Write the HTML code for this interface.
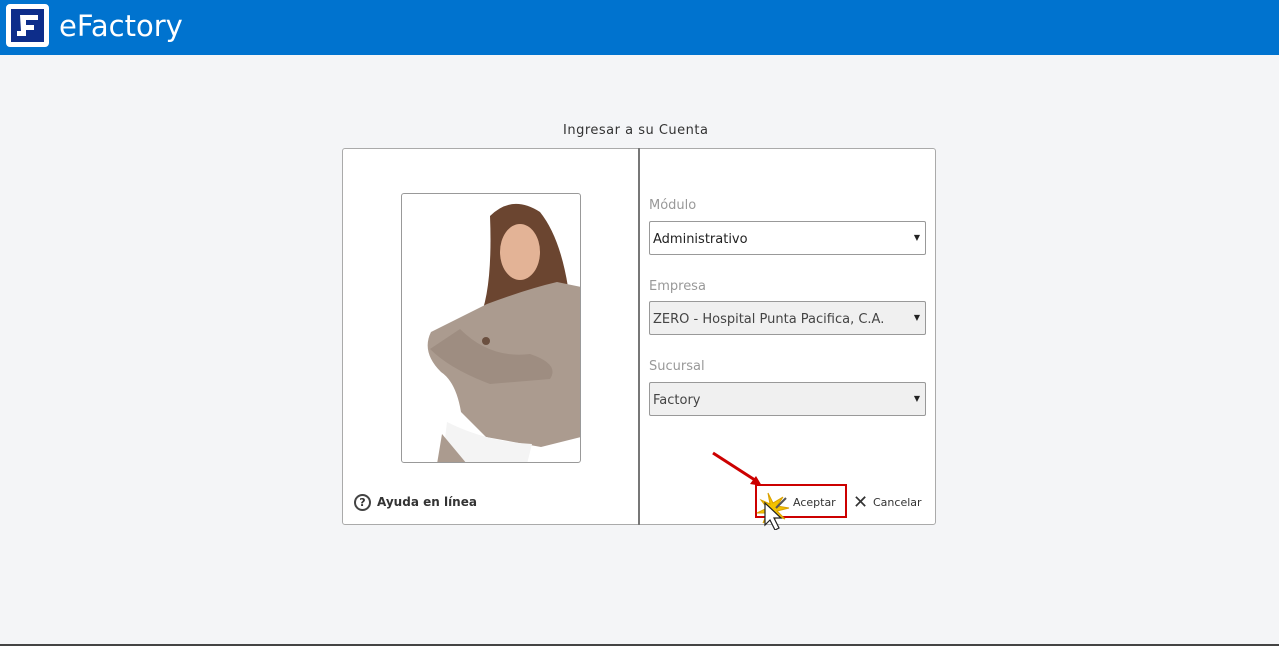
<!DOCTYPE html>
<html><head><meta charset="utf-8"><style>
*{margin:0;padding:0;box-sizing:border-box}
body{width:1279px;height:646px;background:#f4f5f7;font-family:"DejaVu Sans","Liberation Sans",sans-serif;position:relative;overflow:hidden}
.hdr{position:absolute;left:0;top:0;width:1279px;height:55px;background:#0073cf}
.logo{position:absolute;left:6px;top:4px;width:43px;height:43px;border:2px solid #fff;border-radius:4px;background:#fff}
.logo .in{position:absolute;left:3px;top:3px;width:33px;height:33px;background:#0d2d8a}
.title{position:absolute;left:59px;top:9px;color:#fff;font-size:29px;font-family:"DejaVu Sans",sans-serif}
.cap{position:absolute;left:563px;top:123px;font-size:13px;color:#333;letter-spacing:.5px}
.panel{position:absolute;left:342px;top:148px;width:594px;height:377px;background:#fff;border:1px solid #aaa;border-radius:3px}
.div{position:absolute;left:638px;top:148px;width:2px;height:377px;background:#777}
.photo{position:absolute;left:401px;top:193px;width:180px;height:270px;border:1px solid #999;border-radius:3px;background:#fff;overflow:hidden}
.lbl{position:absolute;left:649px;font-size:13px;color:#999}
.sel{position:absolute;left:649px;width:277px;height:34px;border:1px solid #999;border-radius:2px;background:#fff;font-size:13px;color:#222;padding:10px 0 0 3px}
.sel:after{content:"▼";position:absolute;right:5px;top:11px;font-size:8px;color:#222}
.g{background:#f0f0f0;color:#444}
.help{position:absolute;left:354px;top:494px;font-size:12px;font-weight:bold;color:#333}
.help .q{display:inline-block;width:17px;height:17px;border:2px solid #444;border-radius:50%;font-size:11px;text-align:center;line-height:13px;margin-right:6px;vertical-align:middle}
.btn{position:absolute;top:496px;font-size:11px;color:#333}
.red{position:absolute;left:755px;top:484px;width:92px;height:34px;border:2px solid #c00;}
.bline{position:absolute;left:0;top:644px;width:1279px;height:2px;background:#444}
</style></head><body>
<div class="hdr"><div class="logo"><div class="in"><svg width="33" height="33"><path d="M9 6h18v5h-12v5h8v5h-8v6h-9v-5h4z" fill="#fff"/></svg></div></div><div class="title">eFactory</div></div>
<div class="cap">Ingresar a su Cuenta</div>
<div class="panel"></div><div class="div"></div>
<div class="photo"><svg width="180" height="270" viewBox="0 0 180 270">
<path d="M88 22 q22-22 50-4 q20 25 28 75 l10 45 -40 -20 -30 5 q-20 10 -30 5 q15-30 12-106z" fill="#6b4530"/>
<ellipse cx="118" cy="58" rx="20" ry="28" fill="#e3b396"/>
<path d="M85 110 q40-15 70-22 l24 5 v150 l-40 10 -55 -10 -25 -25 q-5 -30 -20 -40 q-20 -20 -10 -40 z" fill="#ab9b8f"/>
<path d="M28 155 q20 20 60 35 l60 -5 q10 -15 -20 -25 q-40 5 -70 -25 z" fill="#9e8d81"/>
<path d="M45 228 q40 20 85 22 l-5 20 h-85 z" fill="#f4f4f4"/>
<path d="M40 240 l-5 30 h30 z" fill="#ab9b8f"/>
<circle cx="84" cy="147" r="4" fill="#6b5040"/>
</svg></div>
<div class="lbl" style="top:198px">Módulo</div>
<div class="sel" style="top:221px">Administrativo</div>
<div class="lbl" style="top:279px">Empresa</div>
<div class="sel g" style="top:301px">ZERO - Hospital Punta Pacifica, C.A.</div>
<div class="lbl" style="top:359px">Sucursal</div>
<div class="sel g" style="top:382px">Factory</div>
<div class="help"><span class="q">?</span>Ayuda en línea</div>
<div class="red"></div>
<div class="btn" style="left:793px">Aceptar</div>
<div class="btn" style="left:853px;top:492px;font-size:18px;color:#333">✕</div>
<div class="btn" style="left:873px">Cancelar</div>
<svg style="position:absolute;left:710px;top:450px" width="90" height="80">
<path d="M3 3 L48 32" stroke="#c00" stroke-width="3"/><path d="M52 36 L40 34 L46 26 z" fill="#c00"/>
<path d="M58 43 l5 10 10-6 -6 9 12 2 -12 3 8 8 -10-4 0 12 -4-11 -8 7 4-10 -10 0 10-5 -6-8 9 4z" fill="#f2c200" stroke="#d9a000" stroke-width="1"/>
<path d="M55 53 l0 22 5 -5 5 10 4-2 -5-10 7 0 z" fill="#fff" stroke="#222" stroke-width="1.2"/>
<path d="M66 58 l10 -10" stroke="#555" stroke-width="2"/>
</svg>
<div class="bline"></div>
</body></html>
